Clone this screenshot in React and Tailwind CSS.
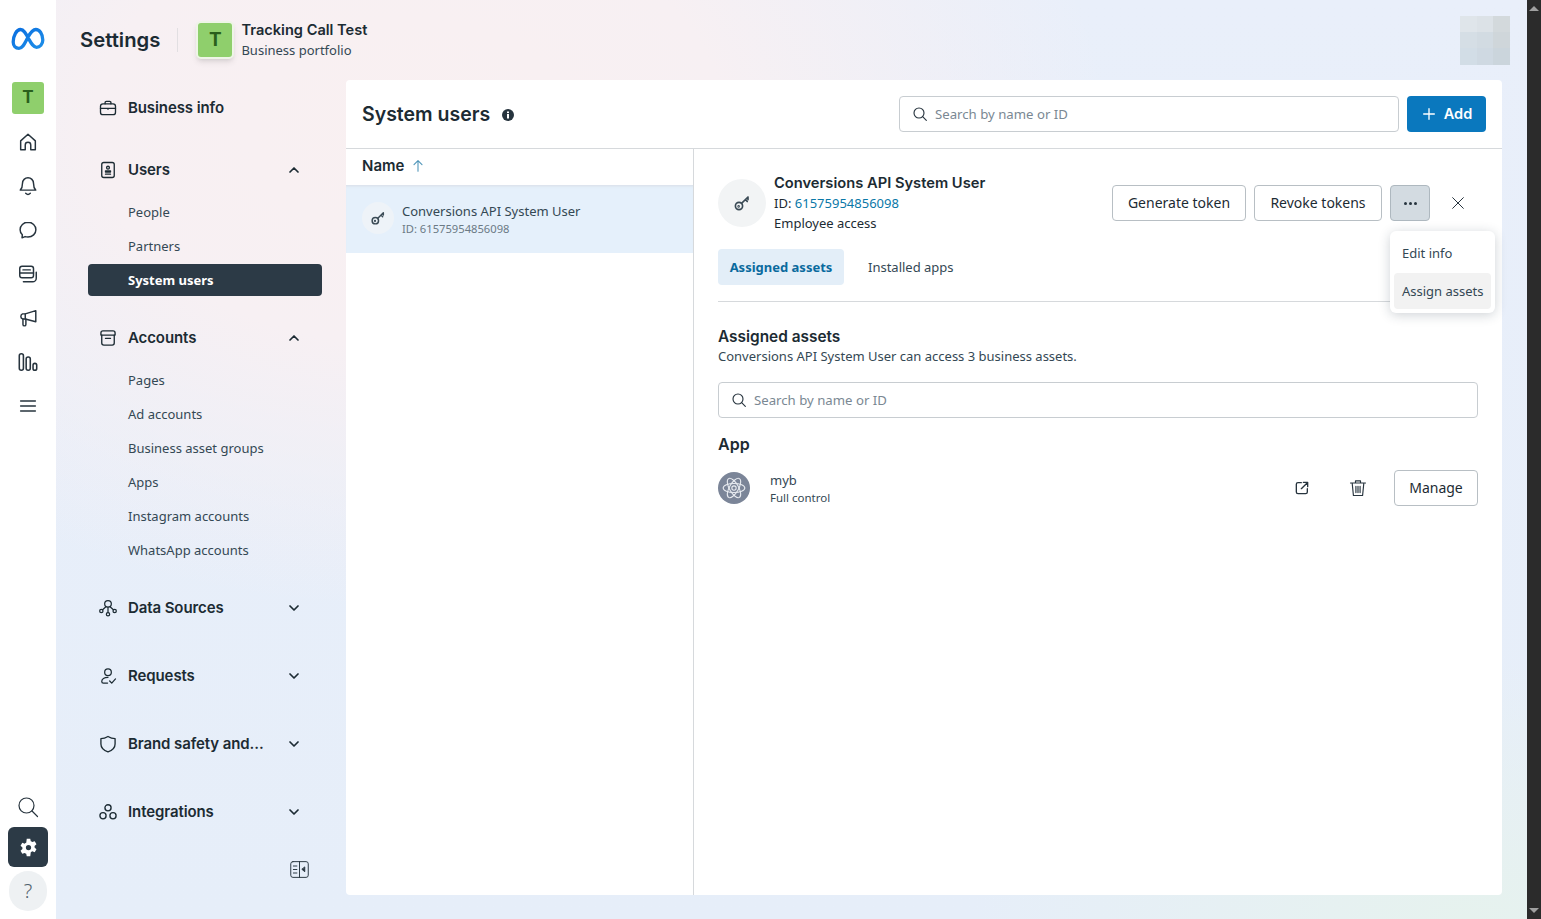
import React from "react";

const S = ({ children, size = 22, sw = 1.6, className = "", vb = "0 0 24 24" }) => (
  <svg width={size} height={size} viewBox={vb} fill="none" stroke="currentColor" strokeWidth={sw} strokeLinecap="round" strokeLinejoin="round" className={className}>{children}</svg>
);

const Home = () => <S><path d="M4 20.5V10.8L12 3.5l8 7.3v9.7h-5v-5.2a3 3 0 0 0-6 0v5.2z" /></S>;
const Bell = () => <S><path d="M12 3a6 6 0 0 0-6 6c0 4-.6 5.6-2.4 7.5h16.8C18.6 14.6 18 13 18 9a6 6 0 0 0-6-6z" /><path d="M9.5 20c1.5 1.4 3.5 1.4 5 0" /></S>;
const Chat = () => <S><path d="M12 3.6c-4.9 0-8.6 3.5-8.6 8 0 2.2.9 4.2 2.4 5.6l-.3 3.4 3.3-1.4c1 .3 2 .4 3.2.4 4.9 0 8.6-3.5 8.6-8s-3.7-8-8.6-8z" /></S>;
const Pages = () => <S><rect x="3" y="3.5" width="15" height="12.5" rx="2.5" /><path d="M6.5 7.5h8M3 11h15" /><path d="M21 10v6.5a4 4 0 0 1-4 4H7" /></S>;
const Mega = () => <S><path d="M20.5 4v12L9 13V7.5z" /><path d="M9 7.5H6a3 3 0 0 0 0 5.5h3" /><path d="M6.5 13v6a1.6 1.6 0 0 0 3.2 0v-6" /></S>;
const Bars = () => <S size={22} sw={1.7}><rect x="2.5" y="3" width="4.5" height="18" rx="2.2" /><rect x="10" y="6.5" width="4.5" height="14.5" rx="2.2" /><rect x="17.5" y="13.5" width="4" height="7.5" rx="2" /></S>;
const Menu = () => <S sw={1.7}><path d="M4 6.5h16M4 12h16M4 17.5h16" /></S>;
const Search = ({ size = 16, sw = 1.7 }) => <S size={size} sw={sw}><circle cx="10.5" cy="10.5" r="7.5" /><path d="M16 16l5.5 5.5" /></S>;
const Gear = () => (
  <svg width="21" height="21" viewBox="0 0 24 24" fill="#fff"><path fillRule="evenodd" d="M10 2h4l.6 2.9c.6.2 1.2.5 1.7.9l2.8-1 2 3.4-2.2 2c.1.6.1 1.2 0 1.7l2.2 2-2 3.5-2.8-1c-.5.4-1.1.7-1.7 1L14 22h-4l-.6-2.9c-.6-.2-1.2-.5-1.7-.9l-2.8 1-2-3.5 2.2-2c-.1-.5-.1-1.1 0-1.7l-2.2-2 2-3.4 2.8 1c.5-.4 1.1-.7 1.7-.9zM12 9a3 3 0 1 0 0 6 3 3 0 0 0 0-6z" /></svg>
);
const Brief = () => <S><rect x="3" y="7" width="18" height="13" rx="3" /><path d="M8.5 7V5.5A1.5 1.5 0 0 1 10 4h4a1.5 1.5 0 0 1 1.5 1.5V7M3 12.5h18M12 12.5v1" /></S>;
const Card = () => <S><rect x="4.5" y="3" width="15" height="18" rx="2.5" /><circle cx="12" cy="9.2" r="1.7" /><path d="M9 13h6v1.5H9zM9 17h6" /></S>;
const Archive = () => <S><path d="M6 3.5h12a2.5 2.5 0 0 1 2.5 2.5v2.5h-17V6A2.5 2.5 0 0 1 6 3.5z" /><path d="M4.5 8.5V18a2.5 2.5 0 0 0 2.5 2.5h10a2.5 2.5 0 0 0 2.5-2.5V8.5M9 12.5h6" /></S>;
const DataS = () => <S sw={1.5}><circle cx="12" cy="7" r="4" /><circle cx="4" cy="15.5" r="2" /><circle cx="20" cy="15.5" r="2" /><circle cx="12" cy="19.5" r="2" /><path d="M9.5 10.5L5.5 14M14.5 10.5L18.5 14M12 11v6.5" /></S>;
const Req = () => <S sw={1.5}><circle cx="12" cy="7.5" r="4" /><path d="M12 13.5c-4.5 0-7.5 2.2-7.5 5 0 1.2.8 2 2 2h5" /><path d="M14 18l2.5 2.500L21 15.5" /></S>;
const Shield = () => <S><path d="M12 3c2.5 1.5 5.5 2.5 8.5 2.5V12c0 4.5-3.5 7.8-8.5 9.5C7 19.8 3.5 16.5 3.5 12V5.5C6.5 5.5 9.5 4.5 12 3z" /></S>;
const Integ = () => <S sw={1.6}><circle cx="12" cy="7" r="3.7" /><circle cx="6" cy="16.5" r="3.7" /><circle cx="18" cy="16.5" r="3.7" /></S>;
const Collapse = () => (
  <S size={21} sw={1.1}><rect x="2" y="3" width="20" height="18" rx="2.5" /><path d="M12 3v18M5 8h4M5 12h4M5 16h4" /><path d="M18 9.5v5L15 12z" fill="currentColor" /></S>
);
const Up = () => <S size={16} sw={2.6}><path d="M6 15l6-6 6 6" /></S>;
const Down = () => <S size={16} sw={2.6}><path d="M6 9l6 6 6-6" /></S>;
const KeyIcon = ({ size = 16 }) => <S size={size} sw={2.2}><circle cx="8" cy="16" r="4.8" /><path d="M11.4 12.6L20 4M20 4v3.500M16.500 7.500l2.500 2.500" /><circle cx="7.500" cy="16.500" r=".6" /></S>;
const AtomIcon = () => (
  <S size={26} sw={1}><circle cx="12" cy="12" r="2" /><ellipse cx="12" cy="12" rx="10" ry="4.2" /><ellipse cx="12" cy="12" rx="10" ry="4.2" transform="rotate(60 12 12)" /><ellipse cx="12" cy="12" rx="10" ry="4.2" transform="rotate(120 12 12)" /></S>
);
const Open = () => <S size={16} sw={2}><path d="M11 4H6a2.5 2.5 0 0 0-2.5 2.5v11.5A2.5 2.5 0 0 0 6 20.5h11.5a2.5 2.5 0 0 0 2.5-2.5V13" /><path d="M14 3.5h6.5V10M20 4l-9 9" /></S>;
const Trash = () => <S size={20} sw={1.4}><path d="M3 6h18M9 6V3.5h6V6M5 6l1.5 15h11L19 6M9.5 10v7.5M12 10v7.5M14.5 10v7.5" /></S>;

const T = "[font-family:'Noto_Sans',sans-serif]";
const H = "[font-family:Inter,sans-serif]";

function RailIcon({ children }) {
  return <div className="h-[44px] w-full flex items-center justify-center text-[#27343e]">{children}</div>;
}

function Head({ icon, label, chev }) {
  return (
    <div className="h-[32px] flex items-center pl-[10px] pr-[20px] text-[#1c2b33]">
      <div className="w-[20px] flex justify-center">{icon}</div>
      <span className={`ml-[10px] flex-1 text-[15px] font-semibold tracking-[-0.1px] whitespace-nowrap ${H}`}>{label}</span>
      {chev === "up" && <Up />}
      {chev === "down" && <Down />}
    </div>
  );
}

function Sub({ label, active }) {
  return (
    <div className="h-[34px] flex items-center">
      <div className={active ? `h-[32px] w-full flex items-center pl-[40px] pt-[1px] rounded-[4px] bg-[#2c3a46] text-white text-[13px] font-bold ${T}` : `pl-[40px] pt-[2px] text-[13px] text-[#344854] ${T}`}>{label}</div>
    </div>
  );
}

const OutlineBtn = ({ children, className = "" }) => (
  <button className={`h-[36px] pb-[2px] rounded-[4px] border border-[#b8bfc4] bg-white text-[14px] text-[#1c2b33] ${T} ${className}`}>{children}</button>
);

const avatarCells = ["#dfe5ea", "#dce2e7", "#d3d9dc", "#d5dee5", "#d2dbe2", "#cfd6da", "#d2dde6", "#cfd9e2", "#cbd5dc"];

export default function App() {
  return (
    <div className={`h-[919px] w-[1541px] flex overflow-hidden bg-[#e8f0fa] ${T}`}>
      <aside className="w-[56px] shrink-0 bg-white flex flex-col items-center pt-[27px] pb-[8px]">
        <svg width="34" height="23" viewBox="0 0 34 23" fill="none">
          <defs>
            <linearGradient id="meta" x1="0" y1="0" x2="1" y2="1">
              <stop offset="0" stopColor="#0a6fe0" /><stop offset="1" stopColor="#1f8fe8" />
            </linearGradient>
          </defs>
          <path d="M2.2 15c0-6.5 3.5-12.5 7.3-12.5 3.2 0 5.2 3.5 8 9 2.8 5 4.7 8.8 8 8.8 3.5 0 6.3-3 6.3-7.3C31.8 7 28.5 2.5 24.8 2.5c-3 0-5.3 3-8 8-3 5.5-4.8 10.8-8.8 10.8-3.5 0-5.8-2.6-5.8-6.3z" stroke="url(#meta)" strokeWidth="3.3" strokeLinejoin="round" />
        </svg>
        <div className={`mt-[32px] h-[32px] w-[32px] rounded-[3px] bg-[#8fcf6c] flex items-center justify-center text-[#2a5f1c] text-[17px] font-bold ${H}`}>T</div>
        <div className="mt-[6px] w-full">
          <RailIcon><Home /></RailIcon>
          <RailIcon><Bell /></RailIcon>
          <RailIcon><Chat /></RailIcon>
          <RailIcon><Pages /></RailIcon>
          <RailIcon><Mega /></RailIcon>
          <RailIcon><Bars /></RailIcon>
          <RailIcon><Menu /></RailIcon>
        </div>
        <div className="mt-auto w-full flex flex-col items-center">
          <div className="h-[40px] flex items-center text-[#27343e]"><Search size={24} sw={1.2} /></div>
          <div className="h-[40px] w-[40px] rounded-[6px] bg-[#2c3a46] flex items-center justify-center"><Gear /></div>
          <div className="mt-[4px] h-[40px] w-[38px] rounded-full bg-[#eef1f3] flex items-center justify-center text-[#50616d] text-[20px] font-light">?</div>
        </div>
      </aside>

      <div className="flex-1 min-w-0 flex flex-col relative bg-[radial-gradient(ellipse_700px_480px_at_24%_14%,#f9f0f1_0%,#f7f0f3_45%,transparent_100%),radial-gradient(ellipse_500px_260px_at_96%_100%,#e6f2ee,transparent),linear-gradient(180deg,#e9effa_0%,#e6eef9_100%)]">
        <header className="h-[80px] shrink-0 flex items-center pl-[24px] pr-[17px]">
          <h1 className={`text-[20.3px] font-semibold text-[#1c2b33] ${H}`}>Settings</h1>
          <div className="ml-[17px] h-[24px] w-px bg-[#e2dfe2]" />
          <div className={`ml-[18px] h-[38px] w-[38px] rounded-[5px] border-2 border-[#eef5e6] bg-[#8fcf6c] shadow-md flex items-center justify-center text-[#2a5f1c] text-[19px] font-bold ${H}`}>T</div>
          <div className="ml-[7px]">
            <div className={`text-[14.6px] leading-[20px] font-semibold text-[#1c2b33] ${H}`}>Tracking Call Test</div>
            <div className="text-[13px] leading-[20px] text-[#344854]">Business portfolio</div>
          </div>
          <div className="ml-auto grid grid-cols-3 grid-rows-3 h-[49px] w-[50px]">
            {avatarCells.map((c, i) => <div key={i} style={{ backgroundColor: c }} />)}
          </div>
        </header>

        <div className="flex-1 min-h-0 flex pb-[24px] pr-[25px]">
          <nav className="w-[290px] shrink-0 pl-[32px] pr-[24px] pt-[12px] flex flex-col">
            <div className="mb-[30px]"><Head icon={<Brief />} label="Business info" /></div>
            <div className="mb-[25px]">
              <Head icon={<Card />} label="Users" chev="up" />
              <div className="mt-[9px]">
                <Sub label="People" /><Sub label="Partners" /><Sub label="System users" active />
              </div>
            </div>
            <div className="mb-[25px]">
              <Head icon={<Archive />} label="Accounts" chev="up" />
              <div className="mt-[9px]">
                {["Pages", "Ad accounts", "Business asset groups", "Apps", "Instagram accounts", "WhatsApp accounts"].map((l) => <Sub key={l} label={l} />)}
              </div>
            </div>
            <div className="mb-[36px]"><Head icon={<DataS />} label="Data Sources" chev="down" /></div>
            <div className="mb-[36px]"><Head icon={<Req />} label="Requests" chev="down" /></div>
            <div className="mb-[36px]"><Head icon={<Shield />} label="Brand safety and..." chev="down" /></div>
            <div><Head icon={<Integ />} label="Integrations" chev="down" /></div>
            <div className="mt-[31px] pr-[12px] flex justify-end text-[#27343e]"><Collapse /></div>
          </nav>

          <main className="flex-1 min-w-0 bg-white rounded-[4px] flex flex-col relative">
            <div className="h-[69px] shrink-0 flex items-center pl-[16px] pr-[16px] border-b border-[#d6d9dc]">
              <h2 className={`text-[19.5px] pt-[1px] font-semibold text-[#1c2b33] ${H}`}>System users</h2>
              <svg className="ml-[12px] mt-[2px]" width="12" height="12" viewBox="0 0 12 12"><circle cx="6" cy="6" r="6" fill="#27343e" /><rect x="5" y="5" width="2" height="4.5" fill="#fff" /><rect x="5" y="2.5" width="2" height="1.6" fill="#fff" /></svg>
              <div className="ml-auto h-[36px] w-[500px] rounded-[4px] border border-[#c8cdd1] flex items-center pl-[12px] text-[#27343e]">
                <Search />
                <span className="ml-[7px] pt-[2px] text-[13.2px] text-[#7a8893]">Search by name or ID</span>
              </div>
              <button className={`ml-[8px] h-[36px] w-[79px] rounded-[4px] bg-[#0a78be] text-white flex items-center justify-center text-[14.5px] font-semibold ${H}`}>
                <S size={16} sw={2}><path d="M12 4v16M4 12h16" /></S>
                <span className="ml-[7px]">Add</span>
              </button>
            </div>

            <div className="flex-1 min-h-0 flex">
              <section className="w-[348px] shrink-0 border-r border-[#d6d9dc] flex flex-col">
                <div className="h-[36px] pb-[2px] flex items-center pl-[16px] text-[#1c2b33]">
                  <span className={`text-[15px] font-semibold ${H}`}>Name</span>
                  <span className="ml-[6px] text-[#4d94b8]"><S size={16} sw={1.6}><path d="M12 20V4M6 10l6-6 6 6" /></S></span>
                </div>
                <div className="h-[68px] bg-[#e5f0fb] shadow-[inset_0_3px_3px_-2px_#d8dee6] flex items-center pl-[16px]">
                  <div className="h-[32px] w-[32px] -mt-[2px] rounded-full bg-[#eef3f8] flex items-center justify-center text-[#3a4a55]"><KeyIcon /></div>
                  <div className="ml-[8px] pt-[2px]">
                    <div className="text-[13px] leading-[18px] text-[#344854]">Conversions API System User</div>
                    <div className="text-[11.2px] leading-[18px] text-[#6b7a85]">ID: 61575954856098</div>
                  </div>
                </div>
              </section>

              <section className="flex-1 min-w-0 pl-[24px] pr-[24px] relative">
                <div className="pt-[24px] flex items-center h-[100px] pb-[16px]">
                  <div className="h-[48px] w-[48px] rounded-full bg-[#f2f4f5] flex items-center justify-center text-[#3a4a55]"><KeyIcon size={18} /></div>
                  <div className="ml-[8px] text-[#1c2b33]">
                    <div className={`text-[14.7px] leading-[20px] font-semibold ${H}`}>Conversions API System User</div>
                    <div className="text-[13px] leading-[20px]">ID: <span className="text-[#0a78a8]">61575954856098</span></div>
                    <div className="text-[13px] leading-[20px]">Employee access</div>
                  </div>
                  <div className="ml-auto flex items-center">
                    <OutlineBtn className="w-[134px]">Generate token</OutlineBtn>
                    <OutlineBtn className="ml-[8px] w-[128px]">Revoke tokens</OutlineBtn>
                    <button className="ml-[8px] h-[36px] w-[40px] rounded-[4px] border border-[#aeb8bf] bg-[#d3dbe1] flex items-center justify-center gap-[2px]">
                      <span className="h-[3px] w-[3px] rounded-full bg-[#27343e]" /><span className="h-[3px] w-[3px] rounded-full bg-[#27343e]" /><span className="h-[3px] w-[3px] rounded-full bg-[#27343e]" />
                    </button>
                    <span className="ml-[20px] mr-[12px] text-[#27343e]"><S size={16} sw={1.5}><path d="M4 4l16 16M20 4L4 20" /></S></span>
                  </div>
                </div>

                <div className="flex items-center h-[53px] pb-[16px] border-b border-[#d6d9dc]">
                  <div className="h-[36px] w-[126px] pt-[2px] rounded-[4px] bg-[#e3eef8] flex items-center justify-center text-[13px] font-bold text-[#0a6a9e]">Assigned assets</div>
                  <div className="ml-[24px] pt-[2px] text-[13px] text-[#344854]">Installed apps</div>
                </div>

                <h3 className={`mt-[25px] text-[15.4px] leading-[20px] font-semibold text-[#1c2b33] ${H}`}>Assigned assets</h3>
                <p className="text-[13px] leading-[18px] text-[#344854]">Conversions API System User can access 3 business assets.</p>

                <div className="mt-[17px] h-[36px] rounded-[4px] border border-[#c8cdd1] flex items-center pl-[12px] text-[#27343e]">
                  <Search />
                  <span className="ml-[7px] pt-[2px] text-[13.2px] text-[#7a8893]">Search by name or ID</span>
                </div>

                <h3 className={`mt-[15px] text-[16px] leading-[22px] font-semibold text-[#1c2b33] ${H}`}>App</h3>

                <div className="mt-[15px] h-[36px] flex items-center">
                  <div className="h-[32px] w-[32px] rounded-full bg-[#7b8598] text-[#e8ebf0] flex items-center justify-center"><AtomIcon /></div>
                  <div className="ml-[20px] pt-[2px] text-[#344854]">
                    <div className="text-[13px] leading-[18px]">myb</div>
                    <div className="text-[11.5px] leading-[18px]">Full control</div>
                  </div>
                  <span className="ml-auto text-[#27343e]"><Open /></span>
                  <span className="ml-[38px] text-[#27343e]"><Trash /></span>
                  <OutlineBtn className="ml-[26px] w-[84px]">Manage</OutlineBtn>
                </div>

                <div className="absolute left-[696px] top-[82px] w-[105px] h-[82px] rounded-[6px] bg-white shadow-[0_2px_12px_rgba(30,50,70,0.22)] p-[4px]">
                  <div className="h-[38px] flex items-center pl-[8px] text-[13px] text-[#344854]">Edit info</div>
                  <div className="h-[36px] pt-[2px] flex items-center pl-[8px] rounded-[4px] bg-[#f2f2f2] text-[13px] text-[#344854] whitespace-nowrap">Assign assets</div>
                </div>
              </section>
            </div>
          </main>
        </div>
      </div>

      <div className="w-[14px] shrink-0 bg-[#2b2b2b] flex flex-col items-center justify-between py-[6px]">
        <div className="h-0 w-0 border-x-[5px] border-x-transparent border-b-[5px] border-b-[#a0a0a0]" />
        <div className="h-0 w-0 border-x-[5px] border-x-transparent border-t-[5px] border-t-[#a0a0a0]" />
      </div>
    </div>
  );
}
